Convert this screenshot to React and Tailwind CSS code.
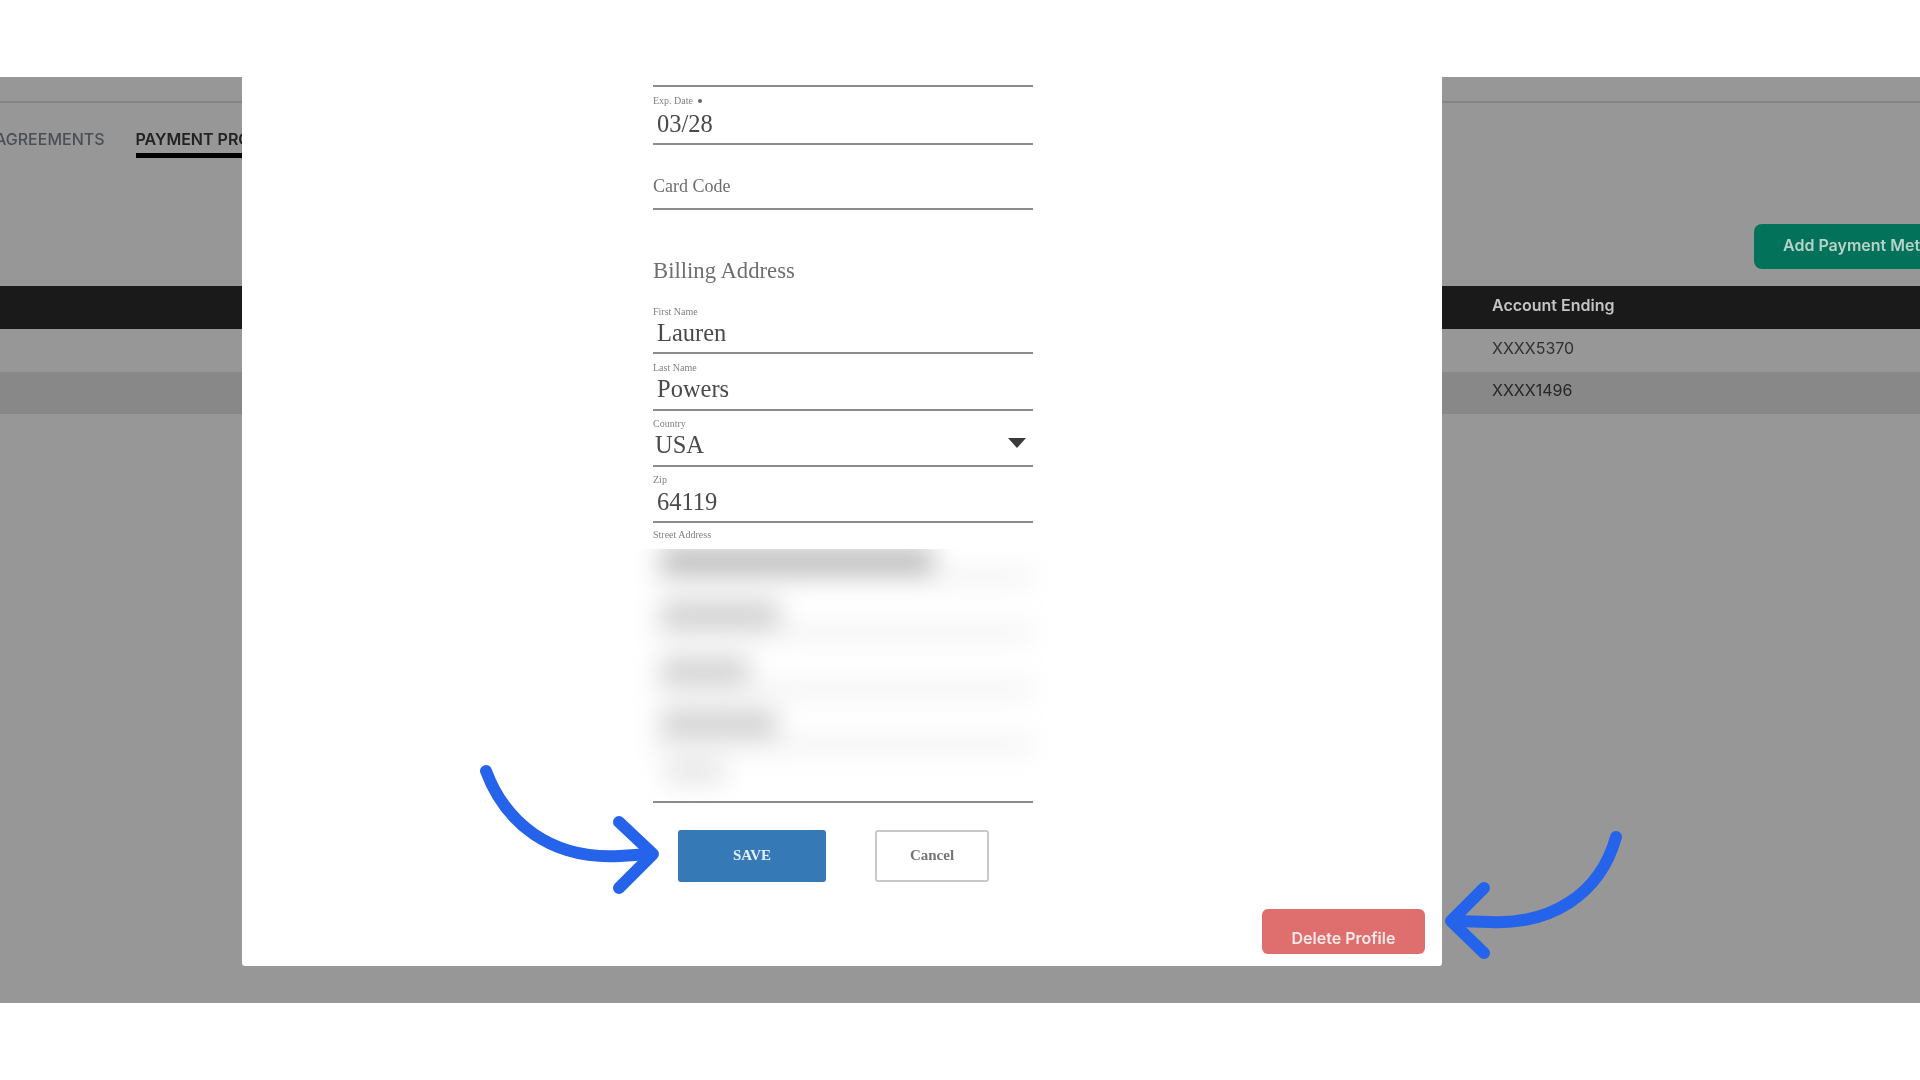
import React from "react";

function Field({ label, value, className = "", pad = "pt-2", valueClass = "mt-[2px]", dot = false, caret = false, valuePad = "pl-1" }) {
  return (
    <div className={`box-border flex flex-col border-b-2 border-[#8c8c8c] ${pad} ${className}`}>
      <div className="flex h-3 items-center gap-[5px] text-[10px] leading-3 text-[#808080]">
        <span>{label}</span>
        {dot && <span className="h-1 w-1 rounded-full bg-[#666]" />}
      </div>
      <div className={`flex h-7 items-center justify-between text-[24.5px] leading-7 text-[#4a4a4a] ${valueClass} ${valuePad}`}>
        <span>{value}</span>
        {caret && (
          <svg width="18" height="10" viewBox="0 0 18 10" className="mr-[7px] -mt-[4px]">
            <path d="M0 0 H18 L9 10 Z" fill="#3a3a3a" />
          </svg>
        )}
      </div>
    </div>
  );
}

function BlurRow({ barWidth, barTone, pad = "pt-[24px]" }) {
  return (
    <div className={`box-border h-14 border-b-2 border-[#999999] ${pad}`}>
      <div className={`ml-[8px] h-6 ${barWidth} ${barTone}`} />
    </div>
  );
}

export default function App() {
  return (
    <div className="relative h-[1080px] w-[1920px] overflow-hidden bg-white pt-[77px] font-['Inter',sans-serif]">
      <div className="relative h-[926px] overflow-hidden bg-[#979797] blur-[0.7px]">
        <div className="h-[26px] border-b-2 border-[#858585]" />
        <div className="-ml-[5px] mt-6 flex gap-[31px] text-base font-medium leading-6">
          <div className="text-[#4a4e55]">AGREEMENTS</div>
          <div className="w-[142px] overflow-hidden whitespace-nowrap border-b-[5px] border-black pb-[2px] font-semibold text-[#222]">
            PAYMENT PROFILES
          </div>
        </div>
        <div className="ml-[1754px] mt-[66px] flex h-[45px] w-[200px] items-start rounded-l-[8px] bg-[#03725a] pl-[29px] pt-[9px] text-base font-semibold leading-6 whitespace-nowrap text-[#b9d2c9]">
          Add Payment Method
        </div>
        <div className="mt-[17px] flex h-[43px] items-center bg-[#1a1a1a] pb-[6px] pl-[1492px] text-base font-semibold text-[#c4c4c4]">
          Account Ending
        </div>
        <div className="flex h-[43px] items-center pb-[5px] pl-[1492px] text-base text-[#303030]">XXXX5370</div>
        <div className="flex h-[42px] items-center bg-[#888888] pb-[6px] pl-[1492px] text-base text-[#262626]">XXXX1496</div>

        <div className="absolute left-[242px] top-0 h-[889px] w-[1200px] overflow-hidden rounded-b-[3px] bg-white font-['Liberation_Serif',serif]">
          <div className="ml-[411px] w-[380px] pt-2">
            <div className="h-[2px] bg-[#8c8c8c]" />
            <Field label="Exp. Date" value="03/28" dot valueClass="mt-[3px]" className="h-[58px]" />
            <div className="box-border h-[65px] border-b-2 border-[#8c8c8c] pt-[29px] text-lg leading-6 text-[#6e6e6e]">
              Card Code
            </div>
            <div className="mb-[13px] mt-[47px] text-[22.7px] leading-7 text-[#6e6e6e]">Billing Address</div>
            <Field label="First Name" value="Lauren" valueClass="mt-[1px]" className="h-14" />
            <Field label="Last Name" value="Powers" valueClass="mt-[1px]" className="h-[57px]" />
            <Field label="Country" value="USA" caret pad="pt-[7px]" valueClass="mt-[1px]" valuePad="pl-[2px]" className="h-14" />
            <Field label="Zip" value="64119" pad="pt-[7px]" valueClass="mt-[2px]" className="h-14" />
            <div className="h-[26px] pt-[6px] text-[10px] leading-3 text-[#808080]">Street Address</div>
            <div className="-mx-5 h-[252px] overflow-hidden px-5">
              <div className="-mt-[27px] blur-[13px]">
                <BlurRow barWidth="w-[272px]" barTone="bg-[#b8b8b8]" pad="pt-[26px]" />
                <BlurRow barWidth="w-[118px]" barTone="bg-[#cccccc]" />
                <BlurRow barWidth="w-[88px]" barTone="bg-[#cecece]" />
                <BlurRow barWidth="w-[116px]" barTone="bg-[#cccccc]" pad="pt-[21px]" />
                <div className="ml-[12px] mt-[16px] h-5 w-[60px] bg-[#e2e2e2]" />
              </div>
            </div>
            <div className="h-[2px] bg-[#8c8c8c]" />
            <div className="ml-[25px] mt-[27px] flex items-stretch gap-[49px] text-[15px] font-bold">
              <div className="flex h-[52px] w-[148px] items-center justify-center rounded-[3px] bg-[#357ab7] pb-[2px] text-[#e6edf5]">
                SAVE
              </div>
              <div className="box-border flex h-[52px] w-[114px] items-center justify-center rounded-[3px] border-2 border-[#c8c8c8] bg-white pb-[2px] text-[#757575]">
                Cancel
              </div>
            </div>
          </div>
          <div className="mt-[27px] flex justify-end pr-[17px]">
            <div className="flex h-[45px] w-[163px] items-start justify-center rounded-[6px] bg-[#df6e6e] pt-[17px] font-['Inter',sans-serif] text-base font-semibold leading-6 text-[#fbeaea]">
              Delete Profile
            </div>
          </div>
        </div>
      </div>

      <svg
        className="pointer-events-none absolute left-0 top-0"
        width="1920"
        height="1080"
        viewBox="0 0 1920 1080"
        fill="none"
        stroke="#2563eb"
        strokeWidth="12"
        strokeLinecap="round"
        strokeLinejoin="round"
      >
        <path d="M486 771 C505 822 550 860 620 856 L650 854" />
        <path d="M619 822 L653 854 L619 888" />
        <path d="M1616 837 C1600 895 1550 925 1490 922 L1455 921" />
        <path d="M1484 888 L1451 921 L1484 953" />
      </svg>
    </div>
  );
}
